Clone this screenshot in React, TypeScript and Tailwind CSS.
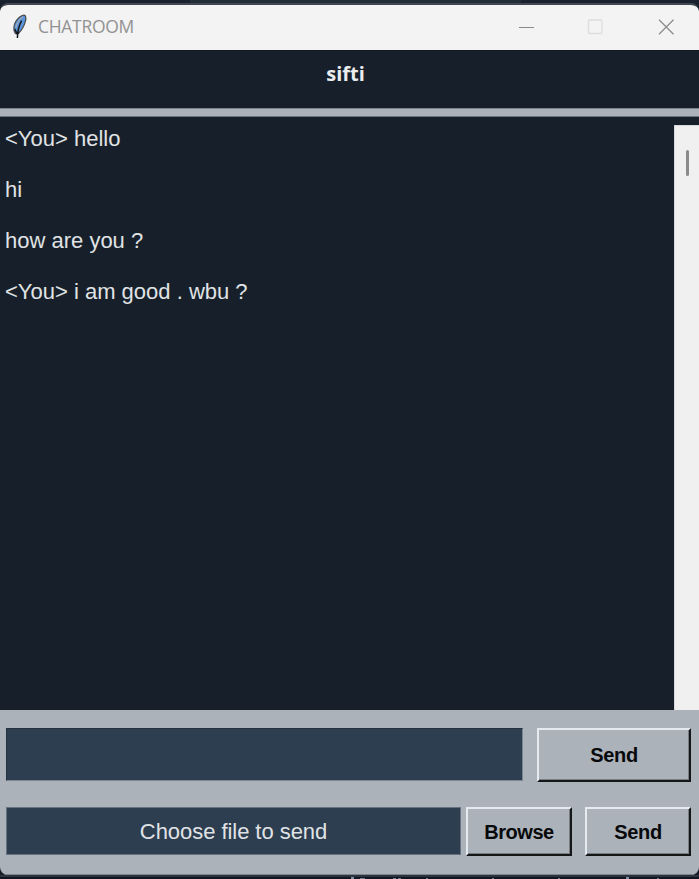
import type { ReactNode } from "react";

const messages = ["<You> hello", "hi", "how are you ?", "<You> i am good . wbu ?"];

function Feather() {
  return (
    <svg width="16" height="26" viewBox="0 0 16 26" className="shrink-0 -translate-y-[1.5px]">
      <path d="M13.2 1.6 C15 1.9 15.3 5 14.2 8.4 C13.2 12.2 10.4 17 7.5 19.8 L4.4 20 C2 17 2.6 11.5 5 7.6 C7.2 4.2 11 1.4 13.2 1.6Z" fill="#5a94dc" stroke="#4b4f54" strokeWidth="1.3" />
      <path d="M11.8 3.2 C9 5.7 6 9.5 4.8 14" fill="none" stroke="#a5adb4" strokeWidth="1.1" />
      <path d="M10.6 7.2 C8.6 11 6.5 16 6.4 24.4 M3.8 15.5 L6.2 20.5 L8 19" fill="none" stroke="#14171c" strokeWidth="1.5" />
    </svg>
  );
}

function RaisedButton({ className, children }: { className: string; children: ReactNode }) {
  return (
    <button
      className={`flex shrink-0 items-center justify-center border-2 border-t-[#e5eaf0] border-l-[#e5eaf0] border-r-[#141618] border-b-[#141618] bg-[#abb2b9] text-[20px] leading-6 font-bold text-[#08090b] shadow-[inset_-1px_-1px_0_#777d82] ${className}`}
    >
      {children}
    </button>
  );
}

export default function App() {
  return (
    <div className="relative flex h-[879px] w-[699px] flex-col overflow-hidden bg-[#17202a] font-['Liberation_Sans',Arial,sans-serif]">
      <div className="flex h-[3px] shrink-0 bg-[#18212d]">
        <div className="ml-[190px] w-[331px] bg-[#232d38]" />
      </div>
      <div className="flex h-[872px] shrink-0 flex-col overflow-hidden rounded-[8px] border-t-2 border-[#414750]">
        <header className="flex h-[45px] shrink-0 items-center rounded-t-[6px] bg-[#f3f3f3] pl-[11px]">
          <Feather />
          <h1 className="ml-[11px] -translate-y-[2px] font-['Open_Sans',sans-serif] text-[17.5px] leading-6 font-normal tracking-[-0.3px] text-[#929292]">CHATROOM</h1>
          <svg width="190" height="24" viewBox="-20 0 190 24" fill="none" className="ml-auto -translate-y-[2px]">
            <path d="M-10 13.5H5" stroke="#8b8b8b" />
            <rect x="59.5" y="6" width="13.5" height="13.5" rx="1" stroke="#dddddd" strokeWidth="1.3" />
            <path d="M130 5.7L144.5 20.2M144.5 5.7L130 20.2" stroke="#8d8d8d" strokeWidth="1.3" />
          </svg>
        </header>
        <div className="flex h-[58px] shrink-0 items-start justify-center border-t border-[#121922] bg-[#17202a] pt-[10px] pr-[8px]">
          <span className="font-['Open_Sans',sans-serif] text-[20px] leading-[26px] font-bold text-[#eaecee]">sifti</span>
        </div>
        <div className="h-[9px] shrink-0 border-t border-b border-t-[#7a828a] border-b-[#6a727a] bg-[#abb2b9]" />
        <main className="flex h-[593px] shrink-0 bg-[#17202a]">
          <div className="flex-1 pt-[9px] pl-[5px] text-[22px] leading-[26px] text-[#e0e3e5]">
            {messages.map((message) => (
              <p key={message} className="mb-[25px]">{message}</p>
            ))}
          </div>
          <div className="mt-[8px] w-[25px] border-t border-l border-[#d8d9da] bg-[#f0f0f0] pt-[24px] pl-[11px]">
            <div className="h-[26px] w-[3px] rounded-full bg-[#8b8b8b]" />
          </div>
        </main>
        <footer className="flex flex-1 flex-col gap-[25px] border-b border-[#7d848b] bg-[#abb2b9] pt-[18px] pr-[8px] pl-[6px]">
          <div className="flex h-[54px] shrink-0 justify-between">
            <input aria-label="Message" className="h-[53px] w-[517px] border border-t-[#25313e] border-l-[#25313e] border-r-[#7a8793] border-b-[#7a8793] bg-[#2c3e50] px-2 text-[22px] text-[#eaecee] outline-none" />
            <RaisedButton className="w-[154px] tracking-[-0.3px]">Send</RaisedButton>
          </div>
          <div className="flex h-[49px] shrink-0">
            <div className="flex h-[48px] w-[455px] shrink-0 items-center justify-center border border-[#66727f] bg-[#2c3e50] text-[22px] tracking-[-0.05px] text-[#e0e3e5]">Choose file to send</div>
            <RaisedButton className="ml-[5px] w-[106px] tracking-[-0.45px]">Browse</RaisedButton>
            <RaisedButton className="ml-[13px] w-[106px] tracking-[-0.3px]">Send</RaisedButton>
          </div>
        </footer>
      </div>
      <svg width="699" height="4" viewBox="0 0 699 4" className="shrink-0">
        <path d="M0 0H699V2H0Z" fill="#2c333d" />
        <path d="M0 2H699V4H0Z" fill="#101722" />
        <path d="M351 2h3v2h-3ZM626 2h3v2h-3Z" fill="#8290a5" />
        <path d="M360 3h5v1h-5ZM393 3h3v1h-3ZM398 3h3v1h-3ZM426 3h2v1h-2ZM492 3h2v1h-2ZM558 3h2v1h-2ZM657 3h2v1h-2Z" fill="#768292" />
      </svg>
    </div>
  );
}
